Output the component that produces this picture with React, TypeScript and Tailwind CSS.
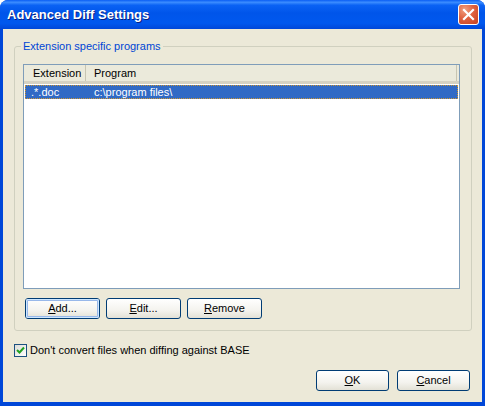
const font = "font-['Tahoma','Liberation_Sans',sans-serif]";

function XpButton({ mn, rest, isDefault, narrow }: { mn: string; rest: string; isDefault?: boolean; narrow?: boolean }) {
  return (
    <button
      className={`h-[21px] ${narrow ? 'w-[73px]' : 'w-[75px]'} rounded-[3px] border border-[#003c74] bg-[linear-gradient(to_bottom,#ffffff_0%,#f4f3ee_60%,#e3e1d6_100%)] text-[11px] text-black`}
    >
      <span
        className={`flex h-full w-full items-center justify-center rounded-[2px] ${
          isDefault ? 'shadow-[inset_0_0_0_1px_#cee7ff,inset_0_0_0_2px_#98b8ea]' : ''
        }`}
      >
        <span className="underline underline-offset-[1px]">{mn}</span>
        {rest}
      </span>
    </button>
  );
}

export default function App() {
  return (
    <div className={`relative h-[406px] w-[485px] overflow-hidden bg-white ${font}`}>
      <div className="flex h-full w-full flex-col overflow-hidden rounded-t-[8px] bg-[#0047d8]">
        {/* Title bar */}
        <div className="flex h-[29px] shrink-0 items-center justify-between bg-[linear-gradient(to_bottom,#0a5ef4_0%,#3b8cff_8%,#0a62f4_18%,#0055ea_45%,#0058ee_80%,#0047d8_100%)] pl-[7px] pr-[6px]">
          <span className="font-['Trebuchet_MS','Liberation_Sans',sans-serif] text-[13px] font-bold text-white [text-shadow:1px_1px_#0a1e80]">
            Advanced Diff Settings
          </span>
          <div className="flex h-[21px] w-[21px] items-center justify-center rounded-[3px] border border-white bg-[radial-gradient(circle_at_30%_25%,#f0a080_0%,#e06240_45%,#c5401f_100%)]">
            <svg width="13" height="13" viewBox="0 0 13 13">
              <path d="M2 2 L11 11 M11 2 L2 11" stroke="white" strokeWidth="2.2" strokeLinecap="square" />
            </svg>
          </div>
        </div>

        {/* Client */}
        <div className="flex flex-1 px-[3px] pb-[4px]">
          <div className="flex flex-1 flex-col bg-[#ece9d8] text-[11px] text-black">
            <fieldset className="ml-[11px] mt-[11px] h-[291px] w-[458px] rounded-[3px] border border-[#d0d0bf] px-[8px]">
              <legend className="-ml-[2px] px-[2px] text-[11px] leading-[13px] text-[#0046d5]">Extension specific programs</legend>

              {/* List view */}
              <div className="mt-[11px] h-[225px] w-[437px] border border-[#7f9db9] bg-white">
                <div className="flex h-[19px] border-b-[3px] border-b-[#d6d2c2] bg-[#ebeadb] leading-[16px]">
                  <div className="flex w-[62px] items-center border-r border-r-[#c7c5b2] pl-[9px]">Extension</div>
                  <div className="mr-[2px] flex flex-1 items-center border-r border-r-[#c7c5b2] pl-[8px]">Program</div>
                </div>
                <div className="mx-[1px] mt-[1px] flex h-[14px] items-center bg-[#316ac5] text-white outline-1 outline-offset-[-1px] outline-dotted outline-[#ce9631]">
                  <span className="w-[62px] pl-[6px]">.*.doc</span>
                  <span className="pl-[7px]">c:\program files\</span>
                </div>
              </div>

              <div className="mt-[9px] flex gap-[6px] pl-[2px]">
                <XpButton mn="A" rest="dd..." isDefault />
                <XpButton mn="E" rest="dit..." />
                <XpButton mn="R" rest="emove" />
              </div>
            </fieldset>

            {/* Checkbox */}
            <div className="ml-[11px] mt-[11px] flex items-center gap-[3px]">
              <div className="flex h-[13px] w-[13px] items-center justify-center border border-[#1c5180] bg-[linear-gradient(135deg,#dcdcd7,#ffffff)]">
                <svg width="9" height="9" viewBox="0 0 9 9">
                  <path d="M1 4 L3.5 6.5 L8 1.5" stroke="#21a121" strokeWidth="2" fill="none" />
                </svg>
              </div>
              <span>Don't convert files when diffing against BASE</span>
            </div>

            <div className="mb-[11px] mr-[12px] mt-auto flex justify-end gap-[8px]">
              <XpButton mn="O" rest="K" narrow />
              <XpButton mn="C" rest="ancel" narrow />
            </div>
          </div>
        </div>
      </div>
    </div>
  );
}
